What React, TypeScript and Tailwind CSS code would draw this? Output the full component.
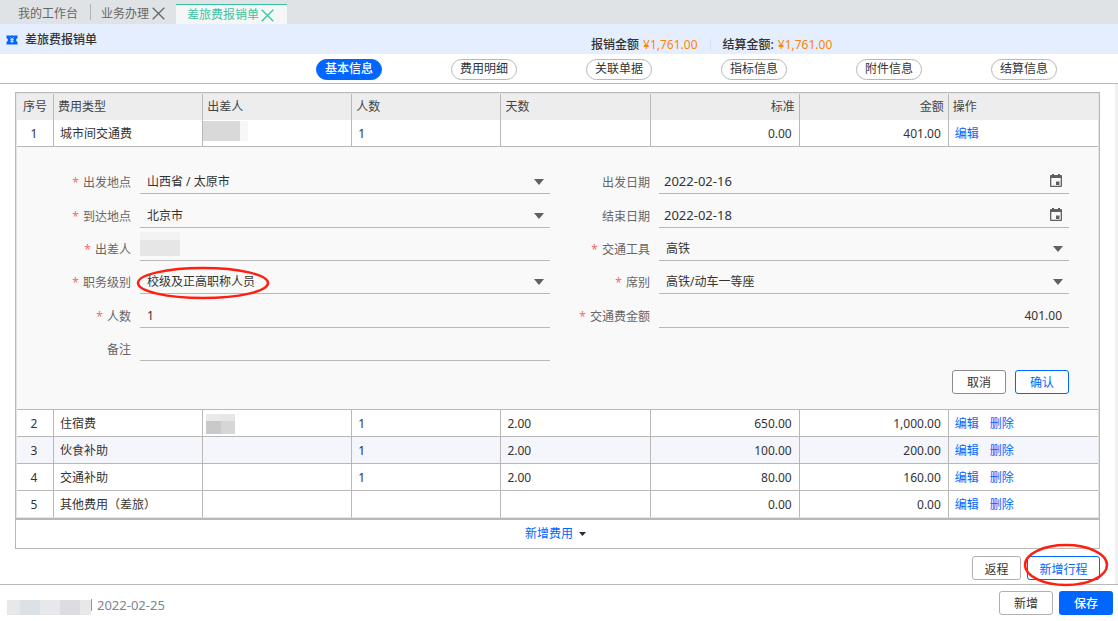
import { useState } from "react";

type Expense = {
  id: number;
  type: string;
  people: string;
  days: string;
  standard: string;
  amount: string;
};

const expenses: Expense[] = [
  { id: 1, type: "城市间交通费", people: "1", days: "", standard: "0.00", amount: "401.00" },
  { id: 2, type: "住宿费", people: "1", days: "2.00", standard: "650.00", amount: "1,000.00" },
  { id: 3, type: "伙食补助", people: "1", days: "2.00", standard: "100.00", amount: "200.00" },
  { id: 4, type: "交通补助", people: "1", days: "2.00", standard: "80.00", amount: "160.00" },
  { id: 5, type: "其他费用（差旅）", people: "", days: "", standard: "0.00", amount: "0.00" },
];

const sections = ["基本信息", "费用明细", "关联单据", "指标信息", "附件信息", "结算信息"];

const fieldBox = "h-[27px] w-full appearance-none rounded-none border-b border-[#b8b8b8] bg-transparent outline-none";
const button = "h-6 rounded-[3px] border bg-white pt-[2px] leading-5";

function CloseIcon() {
  return (
    <svg width="13" height="13" viewBox="0 0 13 13" fill="none" stroke="currentColor" strokeWidth="1.3">
      <path d="M0.7 0.7 12.3 12.3M12.3 0.7 0.7 12.3" />
    </svg>
  );
}

function TicketIcon() {
  return (
    <svg width="12" height="10" viewBox="0 0 12 10">
      <path d="M0.5 0.5h11v2.6a2 2 0 0 0 0 3.8v2.6H0.5V6.9a2 2 0 0 0 0-3.8z" fill="#0066ff" />
      <path d="M4.3 2.4 6 4.3 7.7 2.4M6 4.3V8M4.3 4.7h3.4M4.3 6.3h3.4" stroke="#fff" strokeWidth="0.8" fill="none" />
    </svg>
  );
}

function CalendarIcon() {
  return (
    <svg width="12" height="13" viewBox="0 0 12 13" fill="#606060">
      <path fillRule="evenodd" d="M2 0h2v1h4V0h2v1h1a1 1 0 0 1 1 1v10a1 1 0 0 1-1 1H1a1 1 0 0 1-1-1V2a1 1 0 0 1 1-1h1zM1.300 4v7.800h9.400V4z" />
      <path d="M6 7.500h3.500V11H6z" />
    </svg>
  );
}

function Caret({ className }: { className?: string }) {
  return (
    <svg width="10" height="6" viewBox="0 0 10 6" className={className}>
      <path d="M0 0h10L5 6z" fill="currentColor" />
    </svg>
  );
}

function Label({ id, text, required }: { id: string; text: string; required?: boolean }) {
  return (
    <label htmlFor={id} className="h-[21px] w-[109px] shrink-0 pr-[9px] text-right leading-5 text-[#666]">
      {required && <span className="mr-1 text-[#f56c6c]">*</span>}
      {text}
    </label>
  );
}

function SelectField({ id, label, value, circled }: { id: string; label: string; value: string; circled?: boolean }) {
  return (
    <div className="flex items-end">
      <Label id={id} text={label} required />
      <div className="relative flex-1">
        <select id={id} className={`${fieldBox} pt-1 pr-6 pl-[7px]`}>
          <option>{value}</option>
        </select>
        <Caret className="pointer-events-none absolute top-3 right-[6px] text-[#606060]" />
        {circled && (
          <svg width="134" height="34" viewBox="0 0 134 34" className="pointer-events-none absolute -top-px -left-[4px]">
            <ellipse cx="67" cy="17" rx="65" ry="15" fill="none" stroke="#ff1e0f" strokeWidth="2.500" />
          </svg>
        )}
      </div>
    </div>
  );
}

function DateField({ id, label, value }: { id: string; label: string; value: string }) {
  return (
    <div className="flex items-end">
      <Label id={id} text={label} />
      <div className="relative flex-1">
        <input id={id} defaultValue={value} className={`${fieldBox} pt-[2px] pr-6 pl-[5px] text-[13px]`} />
        <button aria-label="选择日期" className="absolute top-[7px] right-[7px]">
          <CalendarIcon />
        </button>
      </div>
    </div>
  );
}

function TextField({ id, label, value, optional, number }: { id: string; label: string; value: string; optional?: boolean; number?: boolean }) {
  return (
    <div className="flex items-end">
      <Label id={id} text={label} required={!optional} />
      <input id={id} defaultValue={value} className={`${fieldBox} min-w-0 flex-1 px-[7px] pt-1 ${number ? "text-right" : ""}`} />
    </div>
  );
}

function DetailForm() {
  return (
    <form onSubmit={(e) => e.preventDefault()} className="pt-[14px] pr-[29px] pb-[15px] pl-[14px]">
      <div className="grid h-[200px] grid-flow-col grid-cols-2 grid-rows-6">
        <SelectField id="from" label="出发地点" value="山西省 / 太原市" />
        <SelectField id="to" label="到达地点" value="北京市" />
        <div className="flex items-end">
          <Label id="traveller" text="出差人" required />
          <div className="relative flex-1">
            <input id="traveller" className={fieldBox} />
            <div className="absolute -top-[2px] left-0 h-6 w-10 border-t-8 border-[#f3f3f3] bg-[#e6e6e6]" />
          </div>
        </div>
        <SelectField id="level" label="职务级别" value="校级及正高职称人员" circled />
        <TextField id="people" label="人数" value="1" />
        <TextField id="remark" label="备注" value="" optional />
        <DateField id="start" label="出发日期" value="2022-02-16" />
        <DateField id="end" label="结束日期" value="2022-02-18" />
        <SelectField id="vehicle" label="交通工具" value="高铁" />
        <SelectField id="seat" label="席别" value="高铁/动车一等座" />
        <TextField id="fare" label="交通费金额" value="401.00" number />
      </div>
      <div className="mt-[9px] flex justify-end gap-[9px]">
        <button className={`${button} w-[54px] border-[#8c8c8c]`}>取消</button>
        <button className={`${button} w-[54px] border-[#0066ff] text-[#0066ff]`}>确认</button>
      </div>
    </form>
  );
}

function ExpenseRow({ row, last }: { row: Expense; last: boolean }) {
  const td = `h-[27px] border-[#b8b8b8] border-b p-0 pt-[2px] ${last ? "border-b-[#e4e4e4]" : ""}`;
  const mid = `${td} border-r`;
  return (
    <tr className={row.id === 3 ? "bg-[#f5f6fb]" : "bg-white"}>
      <td className={`${mid} pr-[2px] text-center`}>{row.id}</td>
      <td className={`${mid} pl-[6px]`}>{row.type}</td>
      <td className={mid}>
        {row.id === 1 && (
          <div className="-mt-[6px] flex h-5">
            <div className="w-[37px] bg-[#d9d9d9]" />
            <div className="w-2 bg-[#f7f7f7]" />
          </div>
        )}
        {row.id === 2 && (
          <div className="ml-[3px] flex h-5 w-[29px]">
            <div className="flex-1 border-t-[7px] border-[#e9e9e9] bg-[#c9c9c9]" />
            <div className="flex-1 border-t-[7px] border-[#e6e6e6] bg-[#d6d6d6]" />
          </div>
        )}
      </td>
      <td className={`${mid} pl-[6px]`}>{row.people}</td>
      <td className={`${mid} pl-[6px]`}>{row.days}</td>
      <td className={`${mid} pr-[7px] text-right`}>{row.standard}</td>
      <td className={`${mid} pr-[7px] text-right`}>{row.amount}</td>
      <td className={`${td} pl-[6px] text-[#0066ff]`}>
        <button className="mr-[11px]">编辑</button>
        {row.id > 1 && <button>删除</button>}
      </td>
    </tr>
  );
}

function ExpenseTable() {
  const th = "h-[26px] border-r border-[#b8b8b8] px-1 py-0 font-normal";
  return (
    <div className="border border-b-0 border-[#b8b8b8]">
      <div className="border border-b-0 border-[#e4e4e4]">
        <table className="w-full table-fixed border-separate border-spacing-0">
          <thead className="bg-[#ededed] text-left text-[#444]">
            <tr>
              <th className={`${th} w-[37px] text-center`}>序号</th>
              <th className={th}>费用类型</th>
              <th className={th}>出差人</th>
              <th className={th}>人数</th>
              <th className={th}>天数</th>
              <th className={`${th} text-right`}>标准</th>
              <th className={`${th} text-right`}>金额</th>
              <th className="h-[26px] px-1 py-0 font-normal">操作</th>
            </tr>
          </thead>
          <tbody>
            <ExpenseRow row={expenses[0]} last={false} />
            <tr className="bg-[#f9f9f9]">
              <td colSpan={8} className="border-b border-[#b8b8b8] p-0">
                <DetailForm />
              </td>
            </tr>
            {expenses.slice(1).map((row) => (
              <ExpenseRow key={row.id} row={row} last={row.id === 5} />
            ))}
          </tbody>
        </table>
      </div>
      <div className="h-px bg-[#b8b8b8]" />
    </div>
  );
}

export default function App() {
  const [section, setSection] = useState("基本信息");

  return (
    <div className="bg-white font-['Noto_Sans','Noto_Sans_CJK_SC',sans-serif] text-xs leading-[18px] text-[#333]">
      <nav className="flex h-6 items-end bg-[#dfe3e6] text-[#666]">
        <button className="h-6 pt-[3px] pr-3 pl-[18px]">我的工作台</button>
        <div className="mb-1 h-4 w-px bg-[#b0b3b5]" />
        <button className="flex h-6 items-center gap-[3px] pt-[3px] pr-[11px] pl-[10px]">
          业务办理
          <CloseIcon />
        </button>
        <button className="flex h-5 w-[111px] items-center gap-[2px] border-t border-[#3cc4a2] bg-[#f5f7f7] pt-px pl-[11px] text-[#3cc4a2]">
          差旅费报销单
          <CloseIcon />
        </button>
      </nav>

      <header className="flex h-[30px] items-center bg-[#e5eeff]">
        <div className="flex w-[591px] items-center gap-[7px] pt-[2px] pl-[6px]">
          <TicketIcon />
          <h1 className="font-medium">差旅费报销单</h1>
        </div>
        <div className="flex items-center pt-3">
          <span className="mr-1 font-medium">报销金额</span>
          <span className="text-[#ff8400]">¥1,761.00</span>
          <div className="mx-3 h-3 w-px bg-[#d8dfec]" />
          <span className="mr-1 font-medium">结算金额:</span>
          <span className="text-[#ff8400]">¥1,761.00</span>
        </div>
      </header>

      <nav className="flex h-[30px] items-center gap-[69px] border-b border-[#b8b8b8] pt-px pl-[316px]">
        {sections.map((s) => (
          <button
            key={s}
            onClick={() => setSection(s)}
            className={
              s === section
                ? "h-[21px] w-[66px] rounded-full border border-[#0066ff] bg-[#0066ff] font-medium text-white"
                : "h-[21px] w-[66px] rounded-full border border-[#b8b8b8] bg-white"
            }
          >
            {s}
          </button>
        ))}
      </nav>

      <main className="border-r-[3px] border-[#f0f0f0] pt-2 pr-[15px] pb-1 pl-[15px]">
        <ExpenseTable />
        <div className="flex h-[30px] items-center justify-center border border-[#b8b8b8] pr-1">
          <button className="flex items-center gap-[6px] text-[#0066ff]">
            新增费用
            <svg width="7" height="4" viewBox="0 0 7 4">
              <path d="M0 0h7L3.500 4z" fill="#1f2d3d" />
            </svg>
          </button>
        </div>
        <div className="mt-[7px] flex justify-end gap-[6px]">
          <button className="h-6 w-[49px] rounded-[3px] border border-[#b0b0b0] bg-white pt-1">返程</button>
          <div className="relative">
            <button className="h-6 w-[73px] rounded-[3px] border border-[#0066ff] bg-white pt-1 text-[#0066ff]">新增行程</button>
            <svg width="86" height="44" viewBox="0 0 86 44" className="pointer-events-none absolute -top-[13px] -left-1">
              <ellipse cx="43" cy="22" rx="41" ry="20" fill="none" stroke="#ff1e0f" strokeWidth="2.500" />
            </svg>
          </div>
        </div>
      </main>

      <footer className="flex justify-between border-t border-[#b8b8b8] pt-[6px] pr-[5px] pb-[6px] pl-[7px]">
        <div className="flex items-center pt-1 text-[13px] text-[#7d8590]">
          <div className="mt-1 flex h-[15px]">
            <div className="w-[13px] bg-[#e8e8ea]" />
            <div className="w-5 bg-[#dce0e7]" />
            <div className="w-5 bg-[#e8e8ea]" />
            <div className="w-5 bg-[#dcdde2]" />
            <div className="w-[11px] bg-[#e8e8ea]" />
          </div>
          <div className="mr-[5px] h-3 w-px bg-[#6fa3c4]" />
          2022-02-25
        </div>
        <div className="flex gap-[6px]">
          <button className={`${button} w-[54px] border-[#b0b0b0]`}>新增</button>
          <button className="h-6 w-[54px] rounded-[3px] bg-[#0066ff] pt-[2px] font-medium text-white">保存</button>
        </div>
      </footer>
    </div>
  );
}
